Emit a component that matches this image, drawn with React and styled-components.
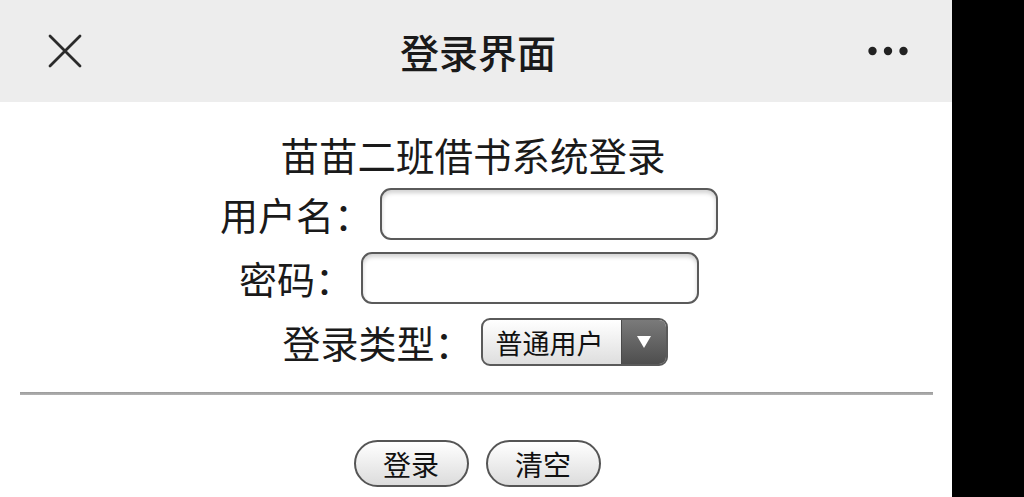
import React from "react";
import styled, { createGlobalStyle } from "styled-components";

const GlobalStyle = createGlobalStyle`
  html, body {
    margin: 0;
    padding: 0;
    background: #000;
  }
  body {
    font-family: "Noto Sans CJK SC", "Noto Sans", sans-serif;
    color: #1e1e1e;
  }
`;

const FONT = `"Noto Sans CJK SC", "Noto Sans", sans-serif`;

const Page = styled.div`
  display: flex;
  height: 497px;
  background: #000;
  overflow: hidden;
`;

const Screen = styled.div`
  width: 952px;
  background: #fff;
  display: flex;
  flex-direction: column;
`;

const Header = styled.header`
  height: 102px;
  background: #ededed;
  display: grid;
  grid-template-columns: 1fr auto 1fr;
  align-items: center;
  padding: 0 44px 0 48px;
`;

const IconButton = styled.div`
  display: flex;
  align-items: center;
  justify-content: ${(p) => (p.right ? "flex-end" : "flex-start")};
`;

const HeaderTitle = styled.h1`
  margin: 0;
  font-family: ${FONT};
  font-size: 39px;
  font-weight: 500;
  color: #1a1a1a;
  letter-spacing: 0;
`;

const Body = styled.main`
  display: flex;
  flex-direction: column;
  align-items: center;
  padding-top: 27px;
`;

const Title = styled.div`
  font-size: 38.5px;
  line-height: 50px;
  height: 50px;
  padding-right: 6px;
  margin-bottom: 9px;
  color: #1a1a1a;
`;

const Form = styled.div`
  display: flex;
  flex-direction: column;
  gap: 12px;
`;

const Row = styled.div`
  display: flex;
  justify-content: center;
  align-items: center;
  height: 52px;
  gap: 8px;
  padding-right: ${(p) => p.shift || 0}px;
`;

const Label = styled.label`
  font-size: 38px;
  line-height: 1;
  color: #1a1a1a;
  white-space: nowrap;
`;

const TextInput = styled.input`
  box-sizing: border-box;
  width: 338px;
  height: 52px;
  border: 2px solid #5a5a5a;
  border-radius: 11px;
  background: #fff;
  box-shadow: inset 0 3px 4px rgba(0, 0, 0, 0.18);
  outline: none;
  font-family: ${FONT};
  font-size: 24px;
  padding: 0 12px;
`;

const Select = styled.div`
  box-sizing: border-box;
  display: flex;
  width: 187px;
  height: 48px;
  border: 2px solid #5a5a5a;
  border-radius: 9px;
  overflow: hidden;
  background: linear-gradient(#ffffff, #dedede);
`;

const SelectValue = styled.span`
  flex: 1;
  display: flex;
  align-items: center;
  padding-left: 13px;
  font-size: 27px;
  color: #111;
`;

const SelectArrow = styled.span`
  width: 44px;
  display: flex;
  align-items: center;
  justify-content: center;
  background: linear-gradient(#7a7a7a, #4e4e4e);
  border-left: 1px solid #4a4a4a;
`;

const Divider = styled.hr`
  align-self: stretch;
  margin: 24px 19px 0 20px;
  border: none;
  height: 3px;
  background: linear-gradient(#9a9a9a, #b4b4b4);
`;

const Buttons = styled.div`
  display: flex;
  justify-content: center;
  gap: 17px;
  margin-top: 45px;
  padding-left: 2px;
`;

const Button = styled.button`
  box-sizing: border-box;
  width: 115px;
  height: 47px;
  border: 2px solid #555;
  border-radius: 24px;
  background: linear-gradient(#ffffff, #dcdcdc);
  font-family: ${FONT};
  font-size: 28px;
  line-height: 1;
  color: #111;
  padding: 0;
  cursor: pointer;
`;

const CloseIcon = () => (
  <svg width="34" height="34" viewBox="0 0 34 34">
    <path
      d="M2 2 L32 32 M32 2 L2 32"
      stroke="#2b2b2b"
      strokeWidth="2.8"
      strokeLinecap="round"
      fill="none"
    />
  </svg>
);

const MoreIcon = () => (
  <svg width="40" height="10" viewBox="0 0 40 10">
    <circle cx="4.5" cy="5" r="4.2" fill="#222" />
    <circle cx="20" cy="5" r="4.2" fill="#222" />
    <circle cx="35.5" cy="5" r="4.2" fill="#222" />
  </svg>
);

const TriangleDown = () => (
  <svg width="14" height="12" viewBox="0 0 14 12">
    <path d="M0 0 H14 L7 12 Z" fill="#fff" />
  </svg>
);

export default function App() {
  return (
    <>
      <GlobalStyle />
      <Page>
        <Screen>
          <Header>
            <IconButton>
              <CloseIcon />
            </IconButton>
            <HeaderTitle>登录界面</HeaderTitle>
            <IconButton right>
              <MoreIcon />
            </IconButton>
          </Header>
          <Body>
            <Title>苗苗二班借书系统登录</Title>
            <Form>
              <Row shift={14}>
                <Label>用户名：</Label>
                <TextInput type="text" />
              </Row>
              <Row shift={14}>
                <Label>密码：</Label>
                <TextInput type="password" />
              </Row>
              <Row shift={2}>
                <Label>登录类型：</Label>
                <Select>
                  <SelectValue>普通用户</SelectValue>
                  <SelectArrow>
                    <TriangleDown />
                  </SelectArrow>
                </Select>
              </Row>
            </Form>
            <Divider />
            <Buttons>
              <Button>登录</Button>
              <Button>清空</Button>
            </Buttons>
          </Body>
        </Screen>
      </Page>
    </>
  );
}
